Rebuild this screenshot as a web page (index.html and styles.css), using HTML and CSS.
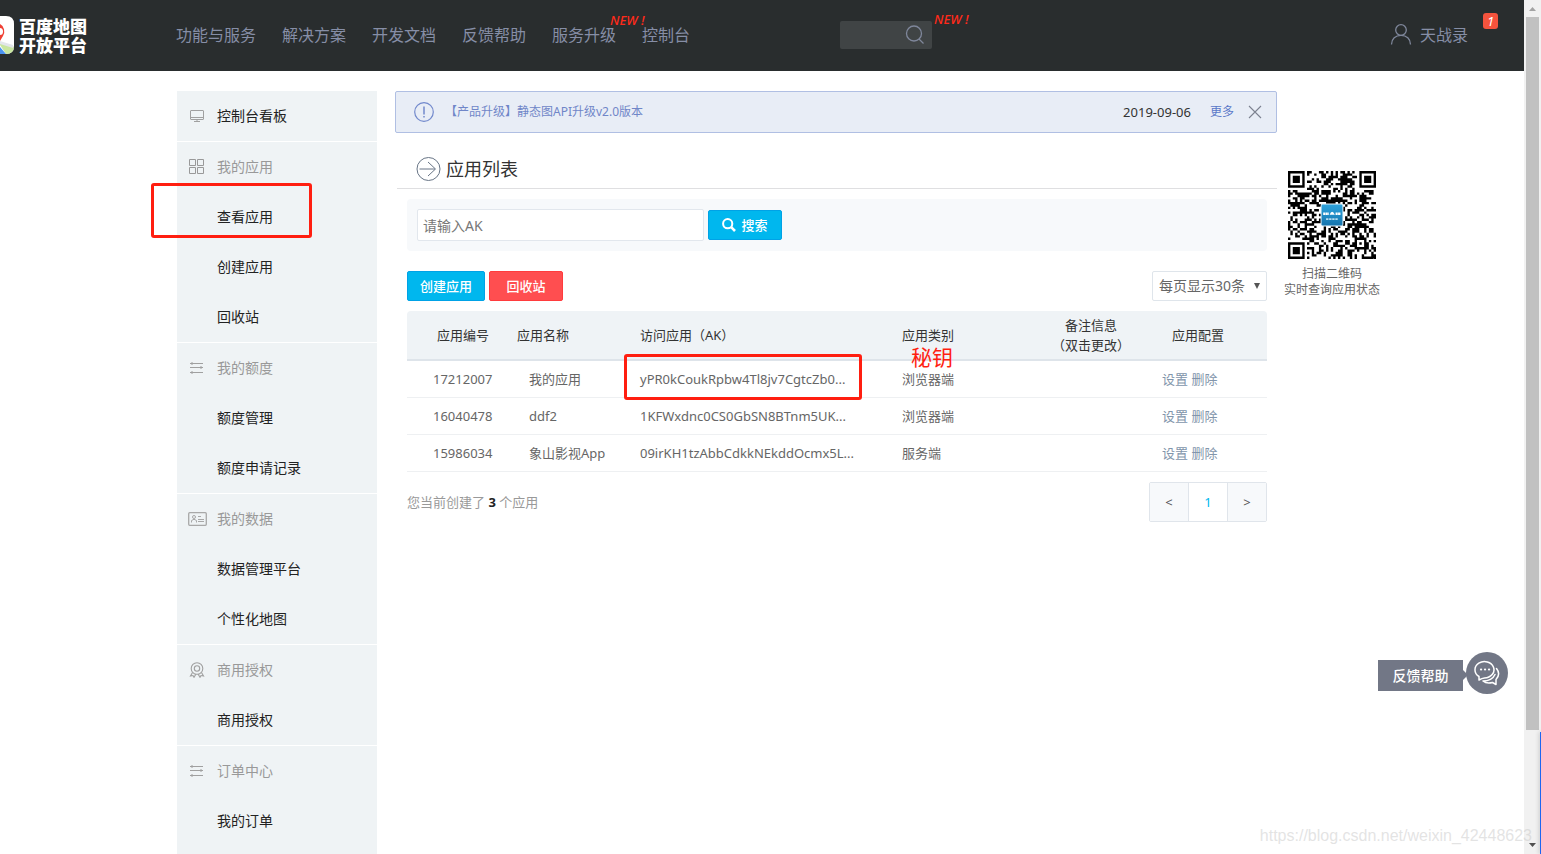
FILE: index.html
```html
<!DOCTYPE html>
<html lang="zh-CN">
<head>
<meta charset="utf-8">
<title>百度地图开放平台 - 应用列表</title>
<link rel="stylesheet" href="styles.css">
</head>
<body>
<div class="viewport">
  <div class="page">
    <header class="topbar">
      <a class="logo" href="#">
        <svg class="logo-mark" width="14" height="38" viewBox="0 0 14 38" aria-hidden="true">
          <path d="M0 0H6Q14 0 14 8V30Q14 38 6 38H0Z" fill="#fff"/>
          <path d="M0 26L14 31V30Q14 38 6 38L0 29Z" fill="#c9e6a0"/>
          <path d="M0 25L13 29V32L0 28Z" fill="#e3e6ea"/>
          <path d="M0 31L6 38H0Z" fill="#4a93f0"/>
          <path d="M0 8A7 8 0 0 1 3 20L0 25Z" fill="#ef4035"/>
          <path d="M0 12A3 3.500 0 0 1 0 19Z" fill="#fff"/>
        </svg>
        <span class="logo-text"><span>百度地图</span><span>开放平台</span></span>
      </a>
      <nav class="nav">
        <a href="#">功能与服务</a>
        <a href="#">解决方案</a>
        <a href="#">开发文档</a>
        <a href="#">反馈帮助</a>
        <a href="#">服务升级<i class="new new-nav">NEW !</i></a>
        <a href="#">控制台</a>
      </nav>
      <div class="site-search">
        <input type="text" aria-label="站内搜索">
        <svg width="20" height="20" viewBox="0 0 20 20" fill="none" stroke="#7f879b" stroke-width="1.3" aria-hidden="true"><circle cx="9" cy="8.500" r="7.500"/><path d="M14 14L18.500 18.500"/></svg>
        <i class="new new-search">NEW !</i>
      </div>
      <a class="user" href="#">
        <svg width="22" height="22" viewBox="0 0 22 22" fill="none" stroke="#7f879b" stroke-width="1.3" aria-hidden="true"><circle cx="11" cy="6" r="5.300"/><path d="M1.500 20.500C1.500 15 5.500 11.300 11 11.300S20.500 15 20.500 20.500"/></svg>
        <span>天战录</span>
        <i class="badge">1</i>
      </a>
    </header>

    <div class="layout">
      <aside class="sidebar">
        <section>
          <a class="item" href="#">
            <svg width="16" height="16" viewBox="0 0 16 16" fill="none" stroke="#a0a0a0" aria-hidden="true"><rect x="1.500" y="2.500" width="13" height="9" rx=".5"/><path d="M2 9.500H14M8 12V14M5 13.500H11"/></svg>
            控制台看板</a>
        </section>
        <section>
          <h3 class="item">
            <svg width="16" height="16" viewBox="0 0 16 16" fill="none" stroke="#999" aria-hidden="true"><path d="M.5.5H6.500V6.500H.5ZM8.500.5H14.500V6.500H8.500ZM.5 8.500H6.500V14.500H.5ZM8.500 8.500H14.500V14.500H8.500Z"/></svg>
            我的应用</h3>
          <a class="item" href="#">查看应用</a>
          <a class="item" href="#">创建应用</a>
          <a class="item" href="#">回收站</a>
        </section>
        <section>
          <h3 class="item">
            <svg width="16" height="16" viewBox="0 0 16 16" fill="none" stroke="#a0a0a0" aria-hidden="true"><path d="M1 3.500H14M1 7.500H14M1 12.500H14M3 2V5M12 6V9M3 11V14"/></svg>
            我的额度</h3>
          <a class="item" href="#">额度管理</a>
          <a class="item" href="#">额度申请记录</a>
        </section>
        <section>
          <h3 class="item">
            <svg class="wide" width="19" height="14" viewBox="0 0 19 14" fill="none" stroke="#a8a8a8" aria-hidden="true"><rect x=".7" y=".7" width="17.600" height="12.600" rx="1" stroke-width="1.300"/><circle cx="6" cy="5" r="1.500"/><path d="M3.500 10.500V8.500Q6 6 8.500 8.500V10.500M10 4.500H13M10 7.500H16M10 9.500H16"/></svg>
            我的数据</h3>
          <a class="item" href="#">数据管理平台</a>
          <a class="item" href="#">个性化地图</a>
        </section>
        <section>
          <h3 class="item">
            <svg width="16" height="16" viewBox="0 0 16 16" fill="none" stroke="#a0a0a0" stroke-width="1.100" aria-hidden="true"><circle cx="8" cy="6.500" r="5.800"/><circle cx="8" cy="6.500" r="2.700"/><path d="M3.500 10.500L1.500 14L4 13.500L5 15.300L7 12M12.500 10.500L14.500 14L12 13.500L11 15.300L9 12"/></svg>
            商用授权</h3>
          <a class="item" href="#">商用授权</a>
        </section>
        <section>
          <h3 class="item">
            <svg width="16" height="16" viewBox="0 0 16 16" fill="none" stroke="#a0a0a0" aria-hidden="true"><path d="M1 3.500H14M1 7.500H14M1 12.500H14M3 2V5M12 6V9M3 11V14"/></svg>
            订单中心</h3>
          <a class="item" href="#">我的订单</a>
        </section>
      </aside>

      <main class="main">
        <div class="notice">
          <svg width="20" height="20" viewBox="0 0 20 20" fill="none" stroke="#7289cc" stroke-width="1.200" aria-hidden="true"><circle cx="10" cy="10" r="9.300"/><path d="M10 4.500V12.500M10 14V15.500" stroke-width="1.500"/></svg>
          <a class="notice-text" href="#">【产品升级】静态图API升级v2.0版本</a>
          <time>2019-09-06</time>
          <a class="more" href="#">更多</a>
          <button class="close" type="button" aria-label="关闭"><svg width="14" height="14" viewBox="0 0 14 14" stroke="#7c8290" stroke-width="1.100"><path d="M1 1L13 13M13 1L1 13"/></svg></button>
        </div>

        <h1 class="title">
          <svg width="25" height="25" viewBox="0 0 25 25" fill="none" stroke="#687586" aria-hidden="true"><circle cx="12.500" cy="13" r="11.500"/><path d="M3.500 13H19M12 6L19.500 13L12 20"/></svg>
          应用列表</h1>

        <div class="content">
          <form class="search">
            <input type="text" placeholder="请输入AK" aria-label="AK">
            <button class="btn blue" type="button"><svg width="14" height="14" viewBox="0 0 14 14" fill="none" stroke="#fff" aria-hidden="true"><circle cx="5.700" cy="5.700" r="4.600" stroke-width="2"/><path d="M9.200 9.200L13 13" stroke-width="2.600"/></svg>搜索</button>
          </form>

          <div class="toolbar">
            <button class="btn blue" type="button">创建应用</button>
            <button class="btn red" type="button">回收站</button>
            <div class="page-size"><select aria-label="每页显示"><option>每页显示30条</option></select></div>
          </div>

          <table class="apps">
            <colgroup><col class="c1"><col class="c2"><col class="c3"><col class="c4"><col class="c5"><col class="c6"></colgroup>
            <thead>
              <tr><th>应用编号</th><th>应用名称</th><th>访问应用（AK）</th><th>应用类别</th><th>备注信息<br>（双击更改）</th><th>应用配置</th></tr>
            </thead>
            <tbody>
              <tr><td>17212007</td><td>我的应用</td><td>yPR0kCoukRpbw4Tl8jv7CgtcZb0...</td><td>浏览器端</td><td></td><td><a href="#">设置</a> <a href="#">删除</a></td></tr>
              <tr><td>16040478</td><td>ddf2</td><td>1KFWxdnc0CS0GbSN8BTnm5UK...</td><td>浏览器端</td><td></td><td><a href="#">设置</a> <a href="#">删除</a></td></tr>
              <tr><td>15986034</td><td>象山影视App</td><td>09irKH1tzAbbCdkkNEkddOcmx5L...</td><td>服务端</td><td></td><td><a href="#">设置</a> <a href="#">删除</a></td></tr>
            </tbody>
          </table>

          <div class="summary">
            <p>您当前创建了 <b>3</b> 个应用</p>
            <div class="pager">
              <button type="button" aria-label="上一页">&lt;</button><button class="current" type="button">1</button><button type="button" aria-label="下一页">&gt;</button>
            </div>
          </div>
        </div>
      </main>

      <aside class="qr">
        <svg id="qr-code" width="88" height="88" viewBox="0 0 37 37" role="img" aria-label="二维码">
          <defs><linearGradient id="qr-blue" x2="0" y2="1"><stop stop-color="#2ea3dc"/><stop offset="1" stop-color="#1474ae"/></linearGradient></defs>
          <path id="qr-modules"/>
          <rect x="13.700" y="13.700" width="9.600" height="9.600" rx="1" fill="#e9f4fa"/>
          <rect x="14.100" y="14.100" width="8.800" height="8.800" rx=".5" fill="url(#qr-blue)"/>
          <path d="M14.800 18H17.200M20 18H22.200" stroke="#fff" stroke-width="1" stroke-dasharray=".9 .15" fill="none"/>
          <path d="M17.500 18.400Q18.500 15.800 19.700 18.400Z" fill="#fff"/>
          <path d="M16 20.200H21" stroke="#b7dcef" stroke-width=".7" stroke-dasharray="1 .3"/>
        </svg>
        <p>扫描二维码<br>实时查询应用状态</p>
      </aside>
    </div>
  </div>

  <div class="scrollbar" aria-hidden="true">
    <svg width="17" height="17" viewBox="0 0 17 17"><path d="M5 11L8.500 7L12 11Z" fill="#a3a3a3"/></svg>
    <div class="thumb"></div>
    <svg width="17" height="17" viewBox="0 0 17 17"><path d="M5 6L8.500 10L12 6Z" fill="#505050"/></svg>
  </div>

  <div class="feedback">
    <span>反馈帮助</span>
    <button type="button" aria-label="反馈帮助">
      <svg width="26" height="26" viewBox="0 0 26 26" fill="none" stroke="#fff" stroke-width="1.500" stroke-linecap="round" stroke-linejoin="round"><path d="M5 20V16.500A9.500 8.200 0 1 1 10.500 18Q8 18.200 5 20Z"/><path d="M22.500 8.500Q27 14 22 19.500V24.500L18.500 22.500Q12.500 24 9 21Q18 21 21 14.500"/><path d="M7 9.500H7.100M11 9.500H11.100M15 9.500H15.100" stroke-width="2.200"/></svg>
    </button>
  </div>
  <div class="mark mark-menu"></div>
  <div class="mark mark-key"></div>
  <div class="mark-text">秘钥</div>
  <div class="edge"></div>
  <div class="watermark">https://blog.csdn.net/weixin_42448623</div>
</div>
<script src="qr.js"></script>
</body>
</html>
```
FILE: styles.css
```css
* { box-sizing: border-box; }
body {
  margin: 0;
  background: #fff;
  color: #333;
  font: 13px/20px "Noto Sans", "Noto Sans CJK SC", sans-serif;
  text-spacing-trim: space-all;
}
a { color: inherit; text-decoration: none; }
h1, h3, p { margin: 0; font-weight: 400; }
button, input, select { font: inherit; }
button { padding: 0; cursor: pointer; }
svg { flex: none; display: block; }

.viewport { position: relative; display: flex; height: 100vh; overflow: hidden; }
.page { flex: 1; min-width: 0; display: flex; flex-direction: column; overflow: hidden; }

/* Top bar */
.topbar {
  flex: none;
  display: flex;
  align-items: center;
  height: 71px;
  padding: 0 26px 1px 0;
  background: #292d2e;
  color: #868ea6;
  font-size: 16px;
}
.logo { display: flex; align-items: center; gap: 5px; width: 90px; color: #fff; white-space: nowrap; }
.logo-text { display: flex; flex-direction: column; font: 900 17px/19px "Noto Sans CJK SC", sans-serif; }
.nav { display: flex; gap: 26px; margin-left: 86px; white-space: nowrap; }
.nav a { position: relative; }
.new { position: absolute; color: #ff2a1a; font-size: 13px; line-height: 16px; font-weight: 500; white-space: nowrap; }
.new-nav { top: -13px; left: 58px; }
.new-search { top: -10px; left: 94px; }
.site-search { position: relative; display: flex; align-items: center; width: 92px; height: 28px; margin-left: 150px; padding-right: 7px; background: #404445; border-radius: 2px; }
.site-search input { flex: 1; min-width: 0; height: 28px; border: 0; background: none; color: #fff; outline: 0; }
.user { position: relative; display: flex; align-items: center; gap: 8px; margin-left: auto; padding-right: 30px; white-space: nowrap; }
.badge { position: absolute; top: -11px; right: 0; width: 15px; height: 16px; border-radius: 3px; background: #f5533d; color: #fff; font-size: 13px; line-height: 16px; text-align: center; }

/* Columns */
.layout {
  flex: 1;
  display: grid;
  grid-template-columns: 200px minmax(0, 1fr) 96px;
  width: 1203px;
  max-width: 100%;
  margin: 20px 0 0 max(0px, calc((100% - 1170px) / 2));
}

.sidebar { background: #eff3f5; }
.sidebar section + section { border-top: 1px solid #fff; }
.item { display: flex; align-items: center; height: 50px; padding-left: 40px; font-size: 14px; color: #222; }
.item svg { width: 16px; margin: 0 12px 0 -28px; }
.item svg.wide { width: 19px; margin: 0 10px 0 -29px; }
h3.item { color: #999; }

/* Main column */
.main { margin: 0 7px 0 18px; }
.notice { display: flex; align-items: center; height: 42px; padding: 0 14px 0 18px; border: 1px solid #b0bfe3; border-radius: 2px; background: #e8edf6; font-size: 12px; }
.notice-text { flex: 1; margin-left: 11px; color: #7086c8; }
.notice time { font-size: 13px; }
.more { margin: 0 14px 0 19px; color: #5a78c8; }
.close { border: 0; background: none; }
.title { display: flex; align-items: center; gap: 5px; height: 56px; margin-left: 2px; padding: 16px 0 0 19px; border-bottom: 1px solid #dfdfe1; font-size: 18px; line-height: 24px; }
.content { margin: 10px 10px 0 12px; }
.search { display: flex; align-items: center; gap: 4px; height: 52px; padding: 0 10px; border-radius: 4px; background: #f7f9fb; }
.search input { width: 287px; height: 32px; padding: 0 5px; border: 1px solid #e2e7ed; border-radius: 2px; font-size: 14px; color: #333; }
.search input::placeholder { color: #777; }
.btn { display: flex; align-items: center; justify-content: center; gap: 5px; width: 74px; height: 30px; border: 1px solid; border-radius: 2px; color: #fff; font-weight: 500; }
.blue { background: #00b7ee; border-color: #00a2e6; color: #fff; }
.red { background: #ff4e50; border-color: #ff3b3d; color: #fff; }
.toolbar { display: flex; gap: 4px; margin: 20px 0 10px; }
.toolbar .blue { width: 78px; }
.page-size { position: relative; margin-left: auto; }
.page-size select { appearance: none; width: 115px; height: 30px; padding: 0 6px; border: 1px solid #dfe5eb; border-radius: 2px; background: #fff; color: #666; font-size: 14px; }
.page-size::after { content: ""; position: absolute; right: 7px; top: 12px; border: 3px solid transparent; border-top: 6px solid #555; border-bottom: 0; }

.apps { width: 100%; border-collapse: separate; border-spacing: 0; table-layout: fixed; }
.c1 { width: 98px; }
.c2 { width: 123px; }
.c3 { width: 262px; }
.c4 { width: 143px; }
.c5 { width: 116px; }
.apps th { height: 50px; padding: 4px 0; background: #eff3f6; border-bottom: 2px solid #dee4ea; font-weight: 400; text-align: left; white-space: nowrap; }
.apps th:first-child { padding-left: 30px; border-top-left-radius: 4px; }
.apps th:last-child { padding-left: 23px; border-top-right-radius: 4px; }
.apps td { height: 37px; padding: 0; border-bottom: 1px solid #eef0f2; color: #666; white-space: nowrap; }
.apps td:first-child { padding-left: 26px; }
.apps td:nth-child(2) { padding-left: 24px; }
.apps th:nth-child(2), .apps th:nth-child(3), .apps td:nth-child(3), .apps th:nth-child(4), .apps td:nth-child(4) { padding-left: 12px; }
.apps th:nth-child(5) { text-align: center; }
.apps td:last-child { padding-left: 13px; color: #8295ab; }

.summary { display: flex; align-items: center; justify-content: space-between; margin-top: 10px; color: #999; }
.summary b { color: #222; }
.pager { display: flex; border: 1px solid #e0e5eb; border-radius: 2px; }
.pager button { width: 38px; height: 38px; border: 0; background: #f7f9fb; color: #555; }
.pager button + button { width: 39px; border-left: 1px solid #e0e5eb; }
.pager .current { background: #fff; color: #00b7ee; }

.qr { display: flex; flex-direction: column; align-items: center; padding-top: 80px; color: #666; font-size: 12px; line-height: 16px; text-align: center; white-space: nowrap; }
.qr p { margin-top: 7px; }

/* Window scroll bar */
.scrollbar { flex: none; display: flex; flex-direction: column; width: 17px; background: #f1f1f1; }
.thumb { height: 83.5%; margin: 0 2px auto; background: #c1c1c1; }
.edge { position: absolute; right: 0; top: 732px; bottom: 0; width: 1px; background: #1e66f0; box-shadow: 0 0 4px #777; }

/* Floating help */
.feedback { position: absolute; right: 33px; top: 652px; display: flex; align-items: center; gap: 3px; }
.feedback span { position: relative; width: 85px; height: 31px; margin-top: 5px; background: #727786; color: #fff; font-size: 14px; line-height: 31px; font-weight: 500; text-align: center; }
.feedback span::after { content: ""; position: absolute; left: 100%; top: 10px; border: 5px solid transparent; border-left-color: #727786; border-right: 0; }
.feedback button { display: grid; place-items: center; width: 42px; height: 42px; border: 0; border-radius: 50%; background: #727786; }

/* Annotations */
.mark { position: absolute; border: 3px solid #ff1e10; border-radius: 3px; }
.mark-menu { left: 151px; top: 183px; width: 161px; height: 55px; }
.mark-key { left: 624px; top: 354px; width: 238px; height: 46px; }
.mark-text { position: absolute; left: 911px; top: 345px; color: #ff1e10; font-size: 21px; line-height: 24px; }
.watermark { position: absolute; right: 9px; bottom: 8px; color: rgba(200, 200, 200, .5); font: 16px/20px "Liberation Sans", sans-serif; }
```
FILE: qr.js
```js
// Builds the module path of a 37 x 37 code with its finder squares.
(function () {
  var size = 37, seed = 20190906, d = "";
  function random() {
    seed = (seed * 1103515245 + 12345) % 2147483648;
    return seed / 2147483648;
  }
  function finder(x, y) {
    if (x < -1 || y < -1 || x > 7 || y > 7) return null;
    if (x < 0 || y < 0 || x > 6 || y > 6) return false;
    var ring = Math.max(Math.abs(x - 3), Math.abs(y - 3));
    return ring !== 2;
  }
  for (var y = 0; y < size; y++) {
    for (var x = 0; x < size; x++) {
      var on = random() > 0.5;
      [finder(x, y), finder(x - 30, y), finder(x, y - 30)].forEach(function (f) {
        if (f !== null) on = f;
      });
      var ring = Math.max(Math.abs(x - 30), Math.abs(y - 30));
      if (ring < 3) on = ring !== 1;
      if (on) d += "M" + x + " " + y + "h1v1h-1z";
    }
  }
  document.getElementById("qr-modules").setAttribute("d", d);
})();
```
